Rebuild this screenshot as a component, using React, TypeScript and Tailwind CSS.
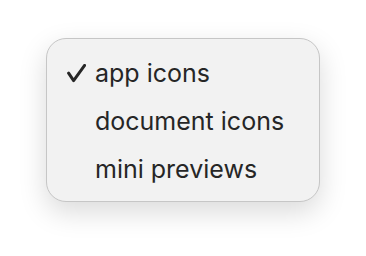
const items = [
  { label: 'app icons', checked: true },
  { label: 'document icons', checked: false },
  { label: 'mini previews', checked: false },
]

function Check() {
  return (
    <svg width="19" height="19" viewBox="0 0 19 19" className="shrink-0">
      <path d="M1.6 9.2 L6.6 16.6 L17.6 1.4" fill="none" stroke="#262626" strokeWidth="3" strokeLinecap="round" strokeLinejoin="round" />
    </svg>
  )
}

export default function App() {
  return (
    <div className="w-[366px] h-[256px] bg-white pl-[46px] pt-[38px]" style={{ fontFamily: 'Inter, "Noto Sans", sans-serif' }}>
      <div className="w-[274px] h-[164px] rounded-[20px] bg-[#f2f2f2] border border-[#c6c6c6] shadow-[0_10px_28px_rgba(0,0,0,0.15)] pt-[10px]">
        {items.map((it) => (
          <div key={it.label} className="flex items-center h-[48px]">
            <div className="w-[48px] flex justify-end pr-[9px]">
              {it.checked && <Check />}
            </div>
            <span className="text-[25px] leading-none text-[#262626]">{it.label}</span>
          </div>
        ))}
      </div>
    </div>
  )
}
